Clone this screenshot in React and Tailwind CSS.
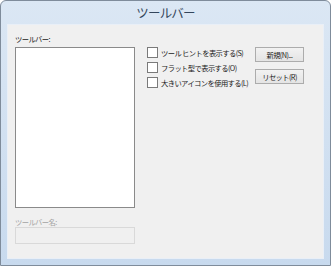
export default function App() {
  const f = { fontFamily: '"Noto Sans CJK JP", "Noto Sans", sans-serif' };
  const checks = [
    'ツール ヒントを表示する(S)',
    'フラット型で表示する(O)',
    '大きいアイコンを使用する(L)',
  ];
  return (
    <div style={f} className="w-[331px] h-[266px] overflow-hidden">
      <div className="w-[331px] h-[266px] rounded-t-[6px] border border-[#7f8c9b] bg-gradient-to-b from-[#dbe7f4] to-[#c8daee] flex flex-col">
        <div className="h-[23px] flex items-center justify-center text-[12.5px] leading-none tracking-[-0.8px] text-[#34465b] pt-[1px]">
          ツールバー
        </div>
        <div className="mx-[6px] mb-[6px] flex-1 border border-[#e9eff7] bg-[#f0f0f0] flex text-[7.3px] leading-[10px] tracking-[-0.6px] text-[#1a1a1a]">
          <div className="ml-[7px] pt-[9px] w-[120px] flex flex-col">
            <div className="h-[10px]">ツールバー:</div>
            <div className="mt-[3px] h-[161px] border border-[#8a8a8a] bg-white"></div>
            <div className="mt-[9px] h-[10px] text-[#a3a3a3]">ツールバー名:</div>
            <div className="h-[17px] border border-[#d9d9d9] bg-[#f0f0f0]"></div>
          </div>
          <div className="ml-[12px] pt-[20px] w-[108px] flex flex-col">
            {checks.map((c) => (
              <div key={c} className="h-[15px] flex items-center">
                <div className="w-[11px] h-[11px] border border-[#7a7a7a] bg-white shrink-0"></div>
                <span className="ml-[3px] whitespace-nowrap">{c}</span>
              </div>
            ))}
          </div>
          <div className="pt-[22px] w-[49px] flex flex-col gap-[7px]">
            <div className="h-[15px] border border-[#acacac] bg-gradient-to-b from-[#f2f2f2] to-[#e4e4e4] flex items-center justify-center">新規(N)...</div>
            <div className="h-[15px] border border-[#acacac] bg-gradient-to-b from-[#f2f2f2] to-[#e4e4e4] flex items-center justify-center">リセット(R)</div>
          </div>
        </div>
      </div>
    </div>
  );
}
